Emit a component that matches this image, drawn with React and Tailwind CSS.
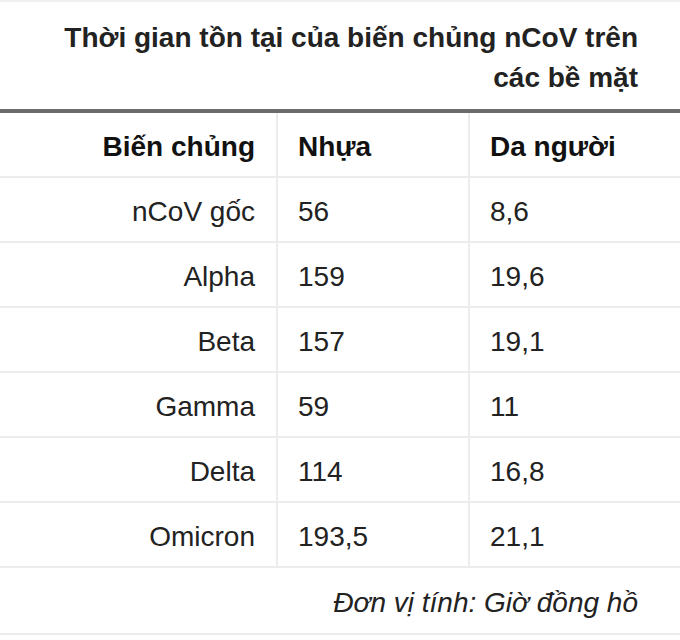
import React from "react";

const rows = [
  ["nCoV gốc", "56", "8,6"],
  ["Alpha", "159", "19,6"],
  ["Beta", "157", "19,1"],
  ["Gamma", "59", "11"],
  ["Delta", "114", "16,8"],
  ["Omicron", "193,5", "21,1"],
];

export default function App() {
  return (
    <div
      className="w-[680px] h-[640px] bg-white text-[#222]"
      style={{ fontFamily: '"Liberation Sans", Arial, sans-serif' }}
    >
      <div className="h-[2px] bg-[#f0f0f0]" />
      <div className="pt-4 pb-[11px] pr-[42px] pl-10 text-right text-[28px] font-bold leading-[40px] text-[#222]">
        Thời gian tồn tại của biến chủng nCoV trên các bề mặt
      </div>
      <div className="border-t-4 border-[#6b6b6b]">
        <div className="flex h-[65px] border-b-2 border-[#ececec] text-[28px] font-bold text-[#111]">
          <div className="w-[278px] border-r-2 border-[#ececec] flex items-center justify-end pr-[21px] pt-[5px]">
            Biến chủng
          </div>
          <div className="w-[192px] border-r-2 border-[#ececec] flex items-center pl-5 pt-[5px]">
            Nhựa
          </div>
          <div className="flex-1 flex items-center pl-5 pt-[5px]">Da người</div>
        </div>
        {rows.map((r) => (
          <div
            key={r[0]}
            className="flex h-[65px] border-b-2 border-[#ececec] text-[28px] text-[#222]"
          >
            <div className="w-[278px] border-r-2 border-[#ececec] flex items-center justify-end pr-[21px] pt-[5px]">
              {r[0]}
            </div>
            <div className="w-[192px] border-r-2 border-[#ececec] flex items-center pl-5 pt-[5px]">
              {r[1]}
            </div>
            <div className="flex-1 flex items-center pl-5 pt-[5px]">{r[2]}</div>
          </div>
        ))}
        <div className="flex h-[67px] items-center justify-end pr-[42px] pt-[5px] border-b-2 border-[#ececec] text-[28px] italic text-[#222]">
          Đơn vị tính: Giờ đồng hồ
        </div>
      </div>
    </div>
  );
}
